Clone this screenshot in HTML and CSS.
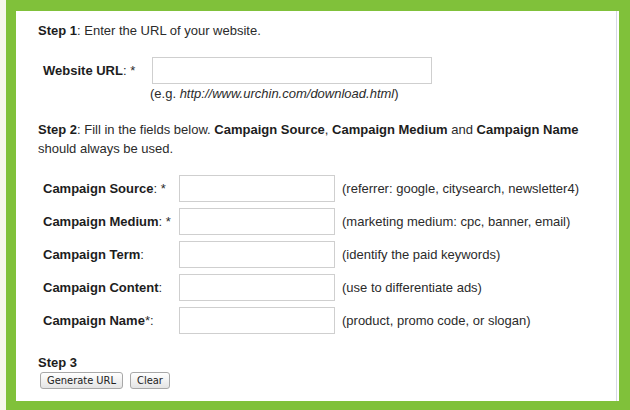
FILE: index.html
```html
<!DOCTYPE html>
<html lang="en">
<head>
    <meta charset="UTF-8">
    <title>URL Builder</title>
    <link rel="stylesheet" href="styles.css">
</head>
<body>
    <div class="frame">
        <form class="panel" id="builder">
            <p class="step"><b>Step 1</b>: Enter the URL of your website.</p>
            <div class="row url-row">
                <label for="url"><b>Website URL</b>: *</label>
                <input type="text" id="url" class="wide">
            </div>
            <p class="example">(e.g. <i>http://www.urchin.com/download.html</i>)</p>

            <p class="step step2"><b>Step 2</b>: Fill in the fields below. <b>Campaign Source</b>, <b>Campaign Medium</b> and <b>Campaign Name</b> should always be used.</p>
            <div class="row">
                <label for="source"><b>Campaign Source</b>: *</label>
                <input type="text" id="source">
                <span class="hint">(referrer: google, citysearch, newsletter4)</span>
            </div>
            <div class="row">
                <label for="medium"><b>Campaign Medium</b>: *</label>
                <input type="text" id="medium">
                <span class="hint">(marketing medium: cpc, banner, email)</span>
            </div>
            <div class="row">
                <label for="term"><b>Campaign Term</b>:</label>
                <input type="text" id="term">
                <span class="hint">(identify the paid keywords)</span>
            </div>
            <div class="row">
                <label for="content"><b>Campaign Content</b>:</label>
                <input type="text" id="content">
                <span class="hint">(use to differentiate ads)</span>
            </div>
            <div class="row">
                <label for="name"><b>Campaign Name</b>*:</label>
                <input type="text" id="name">
                <span class="hint">(product, promo code, or slogan)</span>
            </div>

            <p class="step3"><b>Step 3</b></p>
            <div class="buttons">
                <button type="button">Generate URL</button>
                <button type="reset">Clear</button>
            </div>
        </form>
    </div>
</body>
</html>
```
FILE: styles.css
```css
* {
    box-sizing: border-box;
}
body {
    margin: 0;
    background-color: #f6f7ec;
    font-family: "Liberation Sans", Arial, Helvetica, sans-serif;
    font-size: 13px;
    color: #2b2b2b;
}
.frame {
    margin-left: 6px;
    height: 410px;
    border-style: solid;
    border-color: #80c13a;
    border-width: 11px 11px 9px 10px;
    background-color: white;
    padding-right: 2px;
}
.panel {
    height: 100%;
    border-right: 1px solid #d6d9e6;
    padding: 10px 0 0 22px;
}
.step {
    margin: 0;
    line-height: 19px;
}
b {
    color: #1d1d1d;
}
.row {
    display: flex;
    align-items: center;
    margin-top: 6px;
}
.row label {
    width: 141px;
    padding-left: 5px;
}
.url-row {
    margin-top: 17px;
}
.url-row label {
    width: 114px;
}
.row input {
    width: 156px;
    height: 27px;
    border: 1px solid #cfcfcf;
    border-radius: 0;
    margin: 0;
}
.row input.wide {
    width: 280px;
}
.hint {
    margin-left: 7px;
}
.example {
    margin: 1px 0 0 112px;
    line-height: 18px;
}
.step2 {
    margin-top: 17px;
    margin-bottom: 17px;
}
.step3 {
    margin: 20px 0 0;
    line-height: 17px;
}
.buttons {
    display: flex;
    gap: 7px;
    margin-left: 2px;
    margin-top: 1px;
}
.buttons button {
    font-family: "DejaVu Sans Condensed", "DejaVu Sans", sans-serif;
    font-size: 11px;
    color: #222;
    height: 17px;
    padding: 0 6px;
    border: 1px solid #a8a8a8;
    border-radius: 3px;
    background: linear-gradient(#ffffff, #e4e4e4);
}
```
